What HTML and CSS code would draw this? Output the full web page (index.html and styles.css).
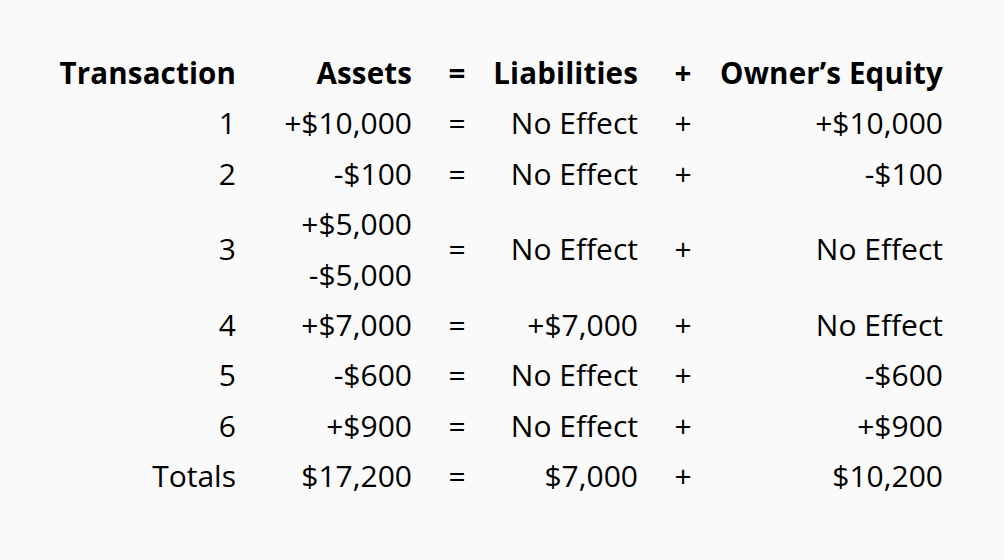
FILE: index.html
```html
<!DOCTYPE html>
<html lang="en">
<head>
<meta charset="utf-8">
<title>Accounting Equation</title>
<link rel="stylesheet" href="styles.css">
</head>
<body>
<div class="sheet">
  <div class="table">
    <div class="cell head">Transaction</div>
    <div class="cell head">Assets</div>
    <div class="cell head op">=</div>
    <div class="cell head">Liabilities</div>
    <div class="cell head op">+</div>
    <div class="cell head">Owner’s Equity</div>

    <div class="cell">1</div>
    <div class="cell">+$10,000</div>
    <div class="cell op">=</div>
    <div class="cell">No Effect</div>
    <div class="cell op">+</div>
    <div class="cell">+$10,000</div>

    <div class="cell">2</div>
    <div class="cell">-$100</div>
    <div class="cell op">=</div>
    <div class="cell">No Effect</div>
    <div class="cell op">+</div>
    <div class="cell">-$100</div>

    <div class="cell">3</div>
    <div class="cell stack"><span>+$5,000</span><span>-$5,000</span></div>
    <div class="cell op">=</div>
    <div class="cell">No Effect</div>
    <div class="cell op">+</div>
    <div class="cell">No Effect</div>

    <div class="cell">4</div>
    <div class="cell">+$7,000</div>
    <div class="cell op">=</div>
    <div class="cell">+$7,000</div>
    <div class="cell op">+</div>
    <div class="cell">No Effect</div>

    <div class="cell">5</div>
    <div class="cell">-$600</div>
    <div class="cell op">=</div>
    <div class="cell">No Effect</div>
    <div class="cell op">+</div>
    <div class="cell">-$600</div>

    <div class="cell">6</div>
    <div class="cell">+$900</div>
    <div class="cell op">=</div>
    <div class="cell">No Effect</div>
    <div class="cell op">+</div>
    <div class="cell">+$900</div>

    <div class="cell">Totals</div>
    <div class="cell">$17,200</div>
    <div class="cell op">=</div>
    <div class="cell">$7,000</div>
    <div class="cell op">+</div>
    <div class="cell">$10,200</div>
  </div>
</div>
</body>
</html>
```

FILE: styles.css
```css
html, body {
  margin: 0;
  padding: 0;
  background: #fafafa;
}
.sheet {
  width: 1004px;
  height: 560px;
  box-sizing: border-box;
  padding: 48px 0 0 60px;
  font-family: "Open Sans", "DejaVu Sans", sans-serif;
  font-size: 30px;
  color: #000;
}
.table {
  display: grid;
  grid-template-columns: 176px 176px 90px 136px 90px 215px;
  align-items: center;
}
.cell {
  line-height: 50.4px;
  text-align: right;
  white-space: nowrap;
  justify-self: end;
}
.head {
  font-weight: 700;
  font-size: 29.5px;
  letter-spacing: 0.15px;
}
.op {
  text-align: center;
  justify-self: center;
}
.stack {
  display: flex;
  flex-direction: column;
  align-items: flex-end;
}
```
